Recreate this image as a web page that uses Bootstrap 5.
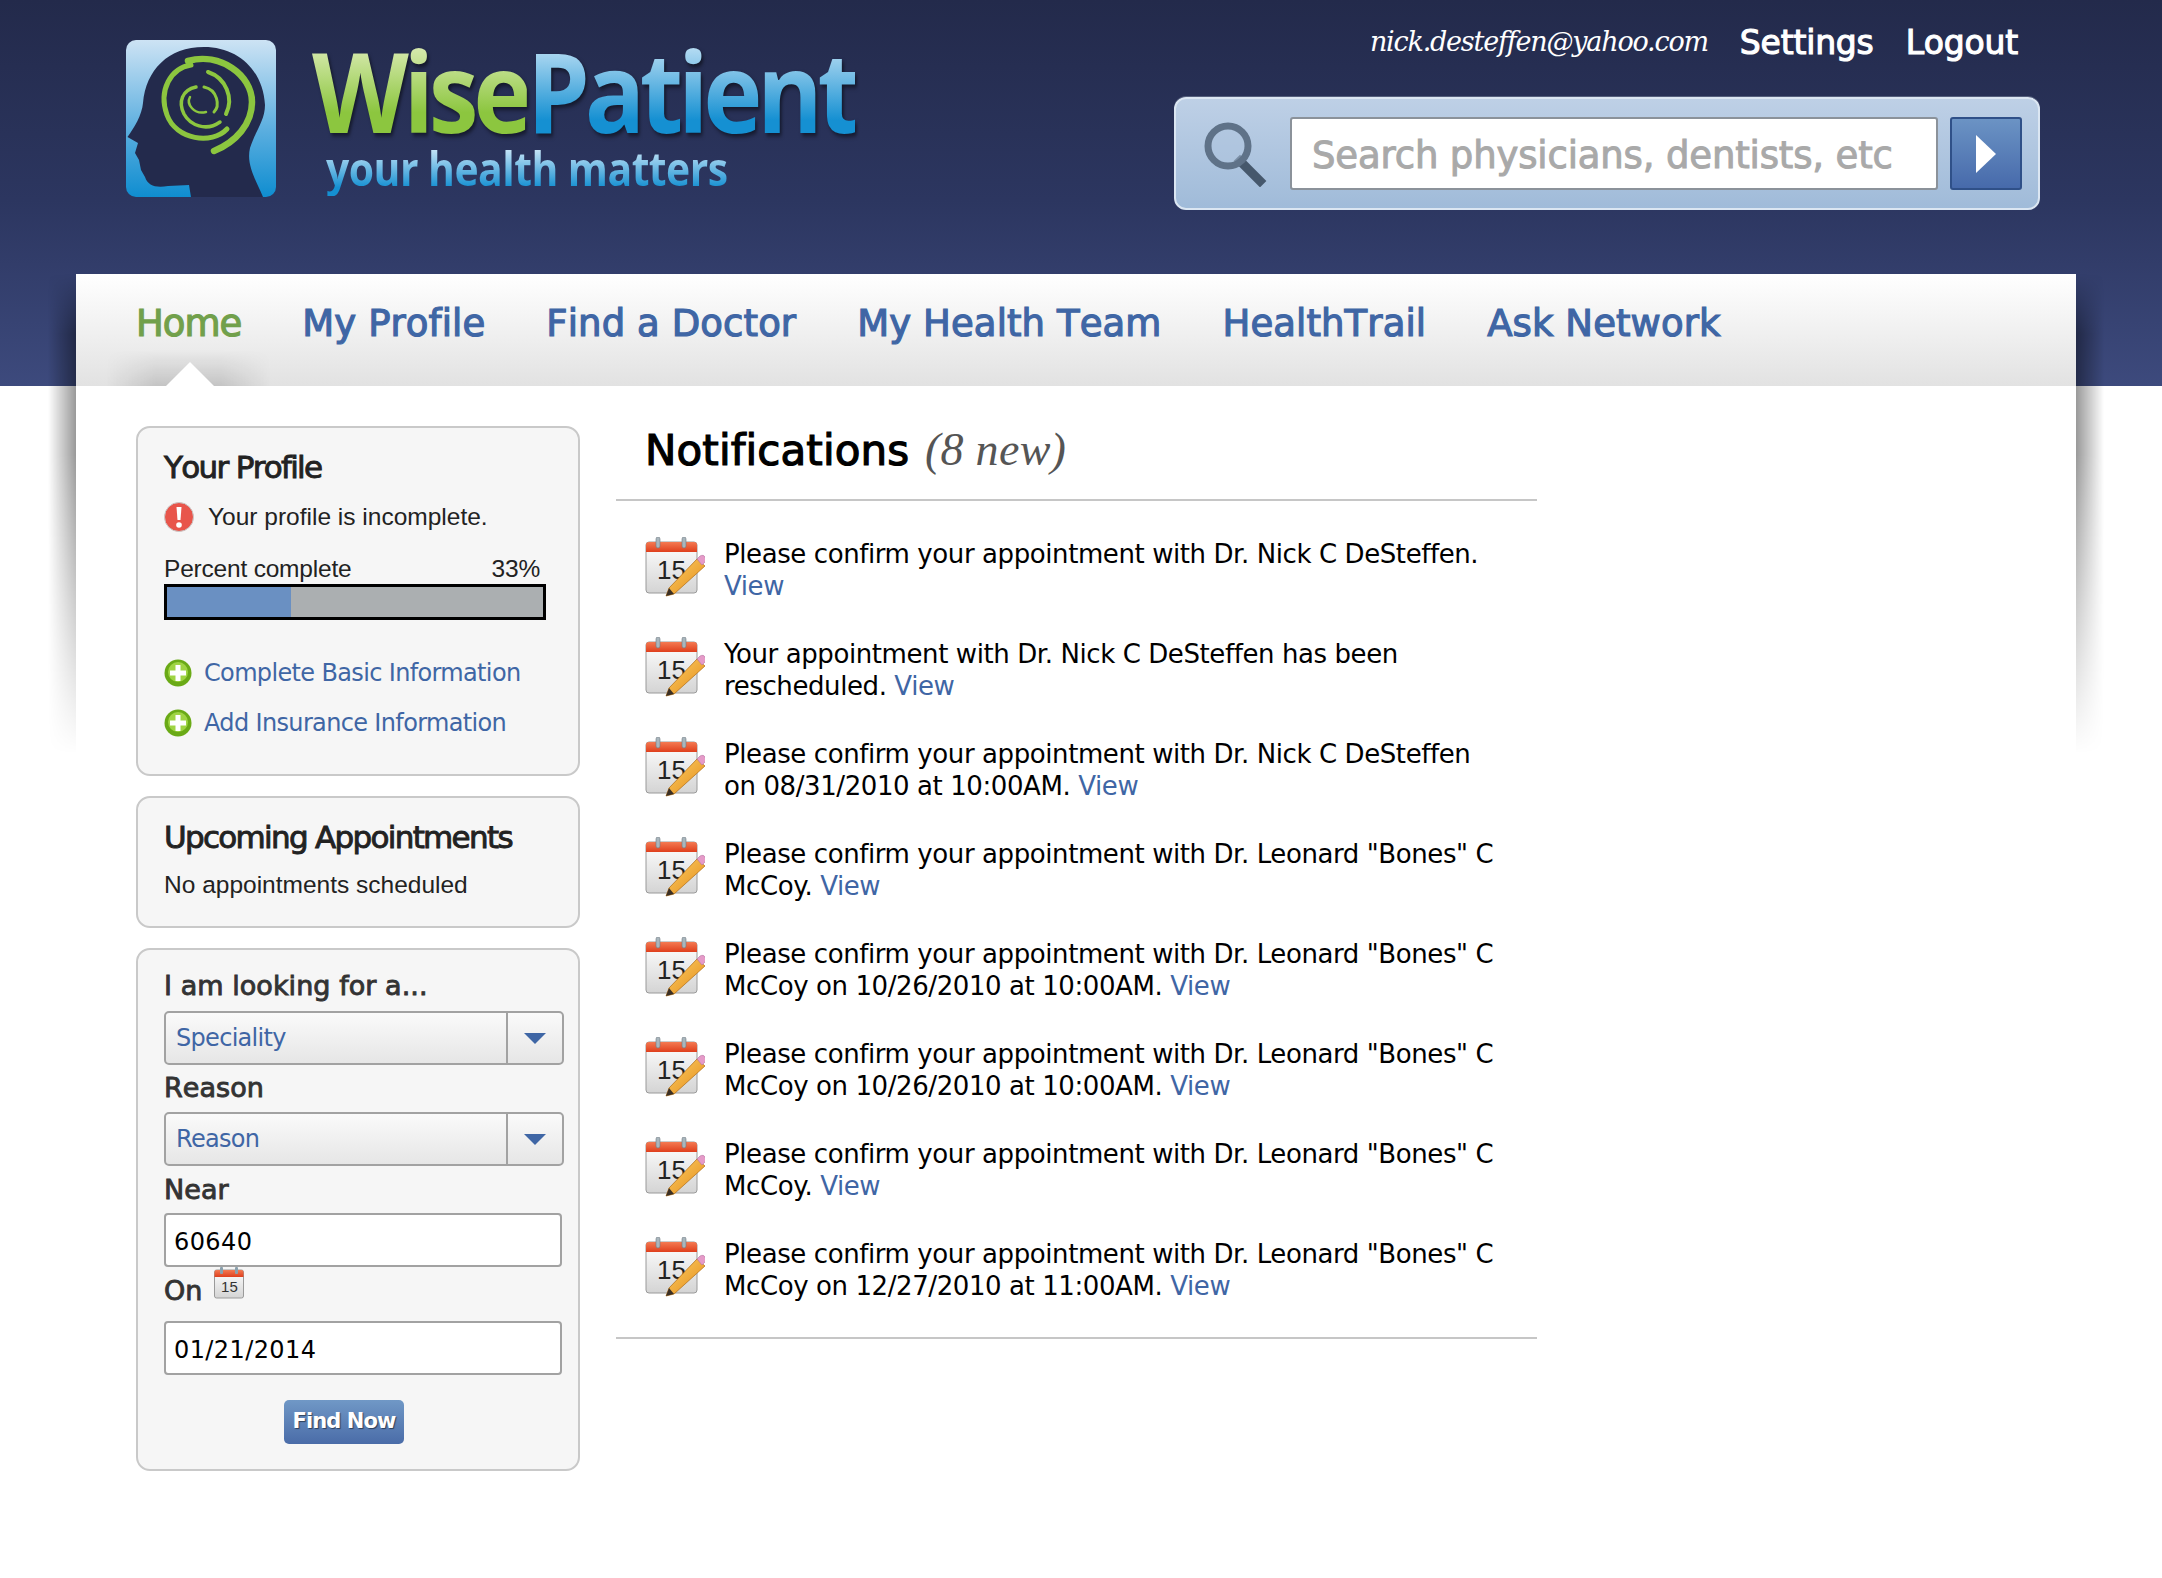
<!DOCTYPE html>
<html lang="en">
<head>
  <meta charset="UTF-8">
  <title>WisePatient</title>
  <link href="https://cdn.jsdelivr.net/npm/bootstrap@5.3.3/dist/css/bootstrap.min.css" rel="stylesheet">
  <style>
    body {
      font-family: "DejaVu Sans", sans-serif;
      color: #000;
      background: #fff linear-gradient(to bottom, #232a4b 0, #2c3660 200px, #3d4a7d 386px) no-repeat;
      background-size: 100% 386px;
    }

    a { text-decoration: none; color: #3f66a5; }

    /* header */
    .wp-head {
      height: 274px;
      padding-left: 126px;
      padding-right: 122px;
    }

    .wp-logo { padding-top: 40px; }

    .wp-logo-text { margin-left: 36px; }

    .wp-logo-name {
      font-family: "Open Sans", sans-serif;
      font-weight: 700;
      font-size: 112px;
      line-height: 100px;
      letter-spacing: -6px;
      white-space: nowrap;
      transform: scaleX(.895);
      transform-origin: 0 0;
      filter: drop-shadow(2px 3px 2px rgba(0, 0, 0, .5));
    }

    .wp-wise, .wp-patient, .wp-tag {
      -webkit-background-clip: text;
      background-clip: text;
      color: transparent;
    }

    .wp-wise { background-image: linear-gradient(to bottom, #e4f0c2 15%, #8cc63f 65%); }
    .wp-patient { background-image: linear-gradient(to bottom, #cfe8f8 15%, #1590d2 70%); }

    .wp-tag {
      font-family: "Open Sans", sans-serif;
      font-weight: 700;
      font-size: 47px;
      line-height: 56px;
      letter-spacing: -.6px;
      margin-left: 14px;
      white-space: nowrap;
      background-image: linear-gradient(to bottom, #d7ecfa 10%, #1590d2 85%);
      display: inline-block;
      transform: scaleX(.87);
      transform-origin: 0 0;
    }

    .wp-user {
      height: 97px;
      padding-top: 22px;
      padding-right: 22px;
      gap: 32px;
    }

    .wp-email {
      font-family: "DejaVu Serif", serif;
      font-style: italic;
      font-size: 27px;
      letter-spacing: -1.2px;
      color: #fff;
    }

    .wp-user a {
      margin-top: -4px;
      font-size: 33px;
      letter-spacing: -.2px;
      font-kerning: none;
      -webkit-text-stroke: 1.1px #fff;
      color: #fff;
    }

    .wp-search {
      width: 866px;
      height: 113px;
      padding: 0 18px 0 26px;
      border: 2px solid #dbe6f2;
      border-radius: 12px;
      background: linear-gradient(to bottom, #bed0e6, #a0bbd9);
      box-shadow: 0 -1px 0 #555f7d;
    }

    .wp-search input.form-control {
      width: 648px;
      height: 73px;
      margin-left: 22px;
      padding: 3px 20px 0;
      border: 2px solid #8b929a;
      border-radius: 3px;
      font-size: 37px;
      letter-spacing: -.15px;
      color: #333;
    }

    .wp-search input::placeholder {
      color: #a9a9a9;
      opacity: 1;
      -webkit-text-stroke: 1px #a9a9a9;
    }

    .wp-go {
      width: 72px;
      height: 73px;
      margin-left: 12px;
      border: 2px solid #2f5088;
      border-radius: 3px;
      background: linear-gradient(to bottom, #6b93c4, #476aab);
    }

    /* panel */
    .wp-page {
      width: 2000px;
      margin-left: 76px;
      position: relative;
    }

    .wp-shade {
      position: absolute;
      top: 0;
      width: 28px;
      height: 480px;
      pointer-events: none;
      -webkit-mask-image: linear-gradient(to bottom, transparent 0, #000 60px, #000 180px, transparent 100%);
      mask-image: linear-gradient(to bottom, transparent 0, #000 60px, #000 180px, transparent 100%);
    }

    .wp-shade-l { left: -28px; background: linear-gradient(to left, rgba(0, 0, 0, .4), transparent); }
    .wp-shade-r { right: -28px; background: linear-gradient(to right, rgba(0, 0, 0, .4), transparent); }

    .wp-nav {
      height: 112px;
      padding-left: 60px;
      background: linear-gradient(to bottom, #fff, #f5f5f5 35%, #e2e2e2);
    }

    .wp-nav .nav-link {
      position: relative;
      padding: 0;
      margin-right: 61px;
      height: 112px;
      line-height: 99px;
      font-size: 37px;
      letter-spacing: .1px;
      font-kerning: none;
      -webkit-text-stroke: 1.2px #3f66a5;
      color: #3f66a5;
    }

    .wp-nav .nav-link.active {
      letter-spacing: -1px;
      color: #71a04b;
      -webkit-text-stroke-color: #71a04b;
    }

    .wp-nav .nav-link.active::before {
      content: "";
      position: absolute;
      left: -30px;
      right: -30px;
      bottom: 0;
      height: 60px;
      background: linear-gradient(to right, rgba(0, 0, 0, 0), rgba(0, 0, 0, .13) 30%, rgba(0, 0, 0, .13) 70%, rgba(0, 0, 0, 0));
      -webkit-mask-image: linear-gradient(to bottom, transparent 40%, #000);
      mask-image: linear-gradient(to bottom, transparent 40%, #000);
      z-index: -1;
    }

    .wp-nav .nav-link.active::after {
      content: "";
      position: absolute;
      left: 30px;
      bottom: 0;
      border-left: 24px solid transparent;
      border-right: 24px solid transparent;
      border-bottom: 24px solid #fff;
    }

    .wp-body {
      padding: 40px 0 0 60px;
      gap: 36px;
      background: #fff;
      min-height: 1192px;
    }

    /* side boxes */
    .wp-side { width: 444px; }

    .wp-box {
      background: #f6f6f6;
      border: 2px solid #c9c9c9;
      border-radius: 14px;
      padding: 0 26px;
      margin-bottom: 20px;
    }

    .wp-box-title {
      font-size: 31px;
      line-height: 38px;
      letter-spacing: -1.7px;
      font-kerning: none;
      -webkit-text-stroke: .9px #222;
      color: #222;
      margin: 0;
    }

    .wp-helv {
      font-family: "Liberation Sans", sans-serif;
      font-size: 24.5px;
      color: #222;
    }

    .wp-pct-wrap { width: 382px; }

    .wp-pct {
      height: 36px;
      border: 3px solid #000;
      border-radius: 0;
      background: #abafb1;
    }

    .wp-pct .progress-bar { background: #6a90c2; }

    .wp-addlink {
      font-size: 24px;
      letter-spacing: -.65px;
      color: #3f66a5;
    }

    .wp-lab {
      font-size: 27px;
      line-height: 34px;
      color: #333;
      letter-spacing: .05px;
      font-kerning: none;
      -webkit-text-stroke: .9px #333;
    }

    .wp-pick {
      width: 400px;
      height: 54px;
      border: 2px solid #a2a2a2;
      border-radius: 5px;
      background: linear-gradient(to bottom, #fafafa, #e6e6e6);
      font-size: 24px;
      letter-spacing: -.7px;
      color: #3f66a5;
    }

    .wp-pick-label { padding-left: 10px; }

    .wp-pick-caret {
      width: 56px;
      border-left: 2px solid #a2a2a2;
    }

    .wp-pick-caret i {
      border-left: 11px solid transparent;
      border-right: 11px solid transparent;
      border-top: 11px solid #3f66a5;
    }

    .wp-box input.form-control {
      width: 398px;
      height: 54px;
      padding: 4px 8px 0;
      border: 2px solid #a2a2a2;
      border-radius: 4px;
      font-size: 24px;
      letter-spacing: .4px;
      color: #000;
    }

    .wp-find {
      width: 120px;
      height: 44px;
      margin-right: 28px;
      padding: 0;
      border: 0;
      border-radius: 5px;
      background: linear-gradient(to bottom, #7098c6, #4a6ca8);
      font-weight: 700;
      font-size: 21px;
      letter-spacing: -.9px;
      color: #fff;
      text-shadow: 1px 1px 1px rgba(0, 0, 0, .5);
    }

    /* notifications */
    .wp-notes { width: 921px; }

    .wp-notes-head {
      height: 75px;
      padding-left: 29px;
      border-bottom: 2px solid #c6c6c6;
      padding-top: 0;
      line-height: 48px;
    }

    .wp-notes-head b {
      font-weight: 400;
      font-size: 42px;
      letter-spacing: .1px;
      font-kerning: none;
      -webkit-text-stroke: 1.2px #000;
    }

    .wp-notes-head em {
      font-family: "Liberation Serif", serif;
      font-size: 46px;
      color: #555;
      letter-spacing: .3px;
      margin-left: 3px;
    }

    .wp-note-list {
      padding: 36px 0 0 29px;
      height: 838px;
      border-bottom: 2px solid #c6c6c6;
    }

    .wp-note {
      height: 100px;
      gap: 19px;
    }

    .wp-note p {
      margin: 1px 0 0;
      font-size: 26px;
      line-height: 32px;
      width: 780px;
      letter-spacing: -.41px;
    }
  </style>
</head>
<body>

<svg width="0" height="0" class="position-absolute">
  <defs>
    <linearGradient id="gPage" x1="0" y1="0" x2="0" y2="1"><stop offset="0" stop-color="#fff"/><stop offset="1" stop-color="#d4d4d4"/></linearGradient>
    <linearGradient id="gBand" x1="0" y1="0" x2="0" y2="1"><stop offset="0" stop-color="#f47a52"/><stop offset="1" stop-color="#df3f1d"/></linearGradient>
    <linearGradient id="gPencil" x1="0" y1="0" x2="1" y2="1"><stop offset="0" stop-color="#fbd06a"/><stop offset="1" stop-color="#e58a14"/></linearGradient>
    <linearGradient id="gTile" x1="0" y1="0" x2="0" y2="1"><stop offset="0" stop-color="#cde3f4"/><stop offset=".55" stop-color="#5fb0e0"/><stop offset="1" stop-color="#0f8dd0"/></linearGradient>
    <symbol id="calIcon" viewBox="0 0 60 60">
      <rect x="1" y="5" width="51" height="51" rx="3" fill="url(#gPage)" stroke="#9a9a9a"/>
      <path d="M1 15V8a3 3 0 0 1 3-3h45a3 3 0 0 1 3 3v7z" fill="url(#gBand)"/>
      <rect x="11" y="0" width="4" height="11" rx="2" fill="#a9b6bd" stroke="#6f7b82" stroke-width=".6"/>
      <rect x="37" y="0" width="4" height="11" rx="2" fill="#a9b6bd" stroke="#6f7b82" stroke-width=".6"/>
      <text x="12" y="42" font-family="Liberation Sans, sans-serif" font-size="26" fill="#222">15</text>
      <path d="M52 22l8 7-31 28-8 2 3-8z" fill="url(#gPencil)" stroke="#b06c12" stroke-width=".7"/>
      <path d="M52 22l3-3c2-1 4-1 5 1 1 2 1 4 0 5l-3 3z" fill="#e59ac8" stroke="#b673a0" stroke-width=".6"/>
      <path d="M24 51l5 6-8 2z" fill="#3a2f25"/>
    </symbol>
    <symbol id="calSmall" viewBox="0 0 30 32">
      <rect x=".5" y="3" width="29" height="28" rx="2" fill="url(#gPage)" stroke="#9a9a9a"/>
      <path d="M.5 10V5a2 2 0 0 1 2-2h25a2 2 0 0 1 2 2v5z" fill="url(#gBand)"/>
      <rect x="6" y="0" width="3" height="7" rx="1" fill="#8aa0ad"/>
      <rect x="21" y="0" width="3" height="7" rx="1" fill="#8aa0ad"/>
      <text x="7" y="25" font-family="Liberation Sans, sans-serif" font-size="15" fill="#333">15</text>
    </symbol>
    <symbol id="plusIcon" viewBox="0 0 28 28">
      <circle cx="14" cy="14" r="13.5" fill="#6aaa16"/>
      <circle cx="14" cy="13" r="10" fill="#9fd443"/>
      <path d="M11.500 6h5v5.500H22v5h-5.500V22h-5v-5.500H6v-5h5.500z" fill="#fff"/>
    </symbol>
  </defs>
</svg>

<header class="wp-head d-flex justify-content-between">
  <div class="wp-logo d-flex">
    <svg width="150" height="157" viewBox="0 0 150 157">
      <rect width="150" height="157" rx="10" fill="url(#gTile)"/>
      <path d="M137 157C130 140 120 125 124 108 130 90 139 80 139 65 137 30 112 7 78 7 42 7 20 30 17 63 16 75 8 88 1.500 97L12 103 9 113 13 120 15 130 19 137C22 146 30 148 42 146L63 145 65 157z" fill="#232a4c"/>
      <g fill="none" stroke="#8cc63f" stroke-linecap="round">
        <path d="M62 21C94 12 126 35 126 62 126 84 110 102 88 111" stroke-width="6.500"/>
        <path d="M101 89C86 105 50 100 41 75 32 50 45 28 65 25" stroke-width="5"/>
        <path d="M82 32C100 38 108 58 100 74" stroke-width="4"/>
        <path d="M94 82C80 92 64 85 58 74 52 62 56 50 70 47" stroke-width="3.500"/>
        <path d="M78 47C92 50 94 66 88 72" stroke-width="3"/>
        <path d="M80 72C68 75 60 64 64 57" stroke-width="2.500"/>
      </g>
    </svg>
    <div class="wp-logo-text">
      <div class="wp-logo-name"><span class="wp-wise">Wise</span><span class="wp-patient">Patient</span></div>
      <div class="wp-tag">your health matters</div>
    </div>
  </div>

  <div class="d-flex flex-column align-items-end">
    <div class="wp-user d-flex align-items-start">
      <span class="wp-email">nick.desteffen@yahoo.com</span>
      <a href="#">Settings</a>
      <a href="#">Logout</a>
    </div>
    <form class="wp-search d-flex align-items-center" onsubmit="return false">
      <svg width="66" height="66" viewBox="0 0 66 66" class="flex-shrink-0">
        <path d="M38 40l20 20" stroke="#46586c" stroke-width="9" stroke-linecap="square"/>
        <circle cx="26" cy="25" r="20" fill="#aec4dd" fill-opacity=".5" stroke="#5f7288" stroke-width="7"/>
      </svg>
      <input class="form-control flex-shrink-0" type="text" placeholder="Search physicians, dentists, etc">
      <button class="wp-go d-flex align-items-center justify-content-center flex-shrink-0" type="submit">
        <svg width="22" height="38" viewBox="0 0 22 38"><path d="M1 0l20 19L1 38z" fill="#fff"/></svg>
      </button>
    </form>
  </div>
</header>

<div class="wp-page">
  <div class="wp-shade wp-shade-l"></div>
  <div class="wp-shade wp-shade-r"></div>

  <ul class="nav wp-nav position-relative z-0">
    <li class="nav-item"><a class="nav-link active" href="#">Home</a></li>
    <li class="nav-item"><a class="nav-link" href="#">My Profile</a></li>
    <li class="nav-item"><a class="nav-link" href="#">Find a Doctor</a></li>
    <li class="nav-item"><a class="nav-link" href="#">My Health Team</a></li>
    <li class="nav-item"><a class="nav-link" href="#">HealthTrail</a></li>
    <li class="nav-item"><a class="nav-link" href="#">Ask Network</a></li>
  </ul>

  <main class="wp-body d-flex align-items-start">
    <aside class="wp-side">
      <section class="wp-box" style="height:350px">
        <h2 class="wp-box-title" style="padding-top:20px">Your Profile</h2>
        <div class="d-flex align-items-center wp-helv" style="margin-top:13px">
          <svg width="30" height="32" viewBox="0 0 30 32" class="flex-shrink-0" style="margin-right:14px">
            <circle cx="15" cy="16" r="14.500" fill="#e8554b" stroke="#c9c9c9"/>
            <path d="M12.500 6h5l-1 13h-3z" fill="#fff"/>
            <circle cx="15" cy="24" r="2.800" fill="#fff"/>
          </svg>
          Your profile is incomplete.
        </div>
        <div class="wp-pct-wrap" style="margin-top:18px">
          <div class="d-flex justify-content-between wp-helv" style="padding-right:6px;line-height:30px;letter-spacing:-.2px"><span>Percent complete</span><span>33%</span></div>
          <div class="progress wp-pct"><div class="progress-bar" style="width:33%"></div></div>
        </div>
        <div class="d-flex align-items-center" style="margin-top:35px">
          <svg width="28" height="28" class="flex-shrink-0" style="margin-right:12px"><use href="#plusIcon"/></svg>
          <a class="wp-addlink" href="#">Complete Basic Information</a>
        </div>
        <div class="d-flex align-items-center" style="margin-top:14px">
          <svg width="28" height="28" class="flex-shrink-0" style="margin-right:12px"><use href="#plusIcon"/></svg>
          <a class="wp-addlink" href="#">Add Insurance Information</a>
        </div>
      </section>

      <section class="wp-box" style="height:132px">
        <h2 class="wp-box-title" style="padding-top:20px">Upcoming Appointments</h2>
        <div class="wp-helv" style="margin-top:11px">No appointments scheduled</div>
      </section>

      <section class="wp-box" style="height:523px">
        <div class="wp-lab" style="padding-top:19px;margin-bottom:8px">I am looking for a...</div>
        <div class="wp-pick d-flex">
          <span class="wp-pick-label flex-grow-1 d-flex align-items-center">Speciality</span>
          <span class="wp-pick-caret d-flex align-items-center justify-content-center"><i></i></span>
        </div>
        <div class="wp-lab" style="margin:6px 0 7px">Reason</div>
        <div class="wp-pick d-flex">
          <span class="wp-pick-label flex-grow-1 d-flex align-items-center">Reason</span>
          <span class="wp-pick-caret d-flex align-items-center justify-content-center"><i></i></span>
        </div>
        <div class="wp-lab" style="margin:7px 0 6px">Near</div>
        <input class="form-control" type="text" value="60640">
        <div class="wp-lab d-flex align-items-start" style="margin:7px 0 13px">On
          <svg width="30" height="32" style="margin:-7px 0 0 12px"><use href="#calSmall"/></svg>
        </div>
        <input class="form-control" type="text" value="01/21/2014">
        <div class="text-center" style="margin-top:25px">
          <button class="wp-find" type="button">Find Now</button>
        </div>
      </section>
    </aside>

    <section class="wp-notes">
      <h1 class="wp-notes-head m-0"><b>Notifications</b> <em>(8 new)</em></h1>
      <div class="wp-note-list" id="noteList"></div>
    </section>
  </main>
</div>

<script>
  const notes = [
    'Please confirm your appointment with Dr. Nick C DeSteffen.',
    'Your appointment with Dr. Nick C DeSteffen has been rescheduled.',
    'Please confirm your appointment with Dr. Nick C DeSteffen on 08/31/2010 at 10:00AM.',
    'Please confirm your appointment with Dr. Leonard "Bones" C McCoy.',
    'Please confirm your appointment with Dr. Leonard "Bones" C McCoy on 10/26/2010 at 10:00AM.',
    'Please confirm your appointment with Dr. Leonard "Bones" C McCoy on 10/26/2010 at 10:00AM.',
    'Please confirm your appointment with Dr. Leonard "Bones" C McCoy.',
    'Please confirm your appointment with Dr. Leonard "Bones" C McCoy on 12/27/2010 at 11:00AM.'
  ];

  const noteList = document.getElementById("noteList");
  notes.forEach(text => {
    const row = document.createElement("div");
    row.className = "wp-note d-flex align-items-start";
    row.innerHTML = `<svg width="60" height="60" class="flex-shrink-0"><use href="#calIcon"/></svg>
      <p>${text} <a href="#">View</a></p>`;
    noteList.appendChild(row);
  });
</script>

<script src="https://cdn.jsdelivr.net/npm/bootstrap@5.3.3/dist/js/bootstrap.bundle.min.js"></script>
</body>
</html>
